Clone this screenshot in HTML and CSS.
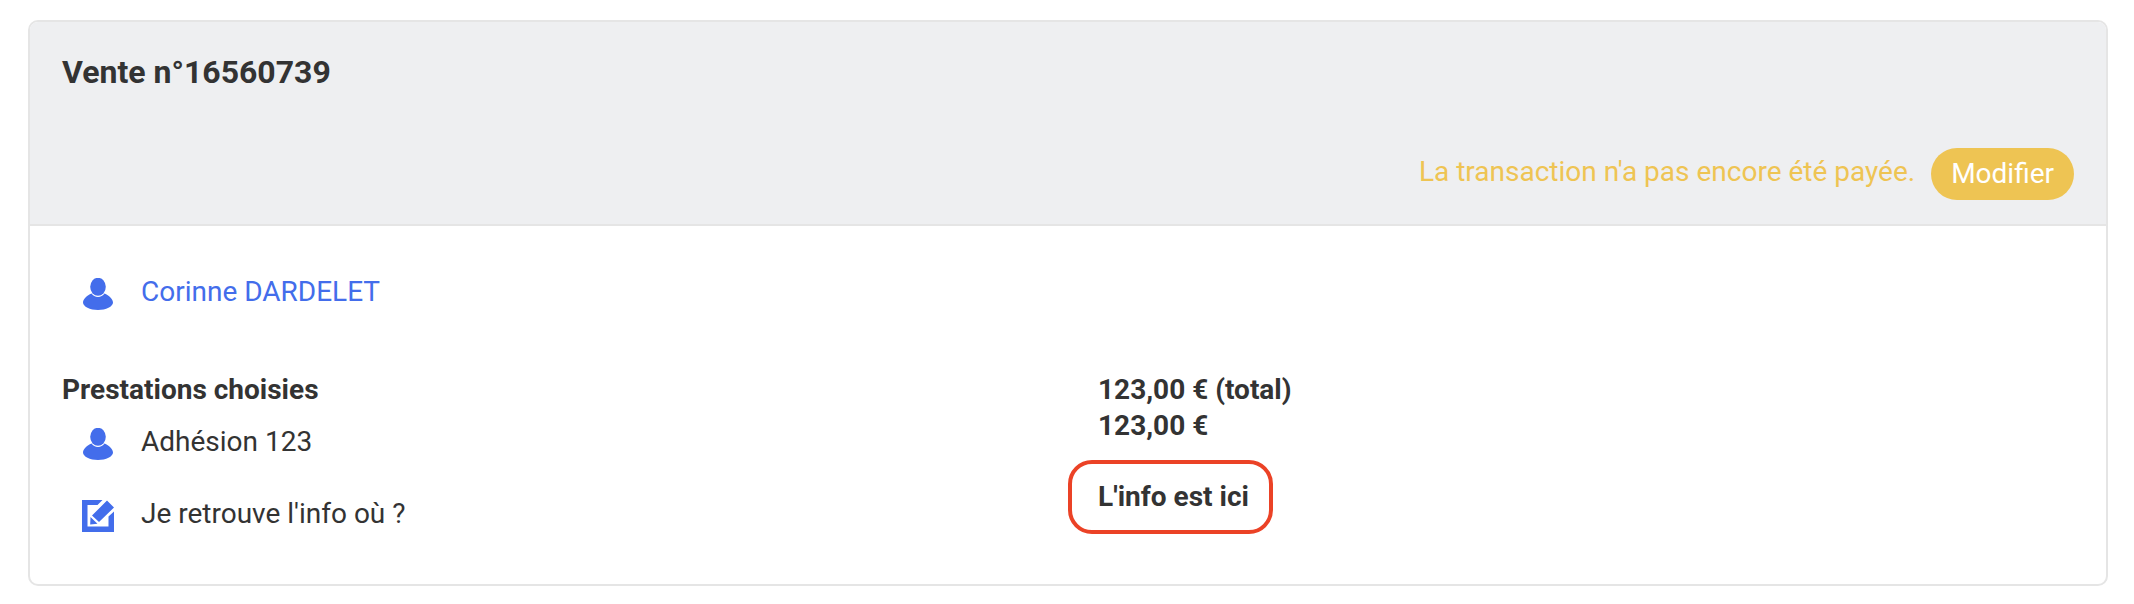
FILE: index.html
```html
<!DOCTYPE html>
<html lang="fr">
<head>
<meta charset="utf-8">
<title>Vente n°16560739</title>
<link rel="stylesheet" href="styles.css">
</head>
<body>
<svg class="sprite" aria-hidden="true">
  <symbol id="icon-user" viewBox="0 0 32 32">
    <path d="M9.5 15.5C5 17.500 1 21 1 24.500C1 28.500 8 32 16 32S31 28.500 31 24.500C31 21 27 17.500 22.500 15.500C21 17.700 18.700 19 16 19S11 17.700 9.500 15.500Z"/>
    <ellipse cx="16" cy="8.800" rx="7.800" ry="9"/>
  </symbol>
  <symbol id="icon-edit" viewBox="0 0 32 32">
    <path d="M0 0H20.500L15.500 5H5.500V26.500H26.500V16.500L32 11.500V32H0Z"/>
    <path d="M25 0.500L32 7.500L17 22L10 15.500ZM8.500 17L15.500 23.800L8.200 24.500Z"/>
  </symbol>
</svg>
<main class="card">
  <header class="card-header">
    <h1 class="card-title">Vente n°16560739</h1>
    <div class="status">
      <p class="status-text">La transaction n'a pas encore été payée.</p>
      <button class="status-button" type="button">Modifier</button>
    </div>
  </header>
  <div class="card-body">
    <div class="item">
      <svg class="icon" aria-hidden="true"><use href="#icon-user"/></svg>
      <a class="customer" href="#">Corinne DARDELET</a>
    </div>
    <div class="columns">
      <section>
        <h2 class="section-title">Prestations choisies</h2>
        <ul class="items">
          <li class="item">
            <svg class="icon" aria-hidden="true"><use href="#icon-user"/></svg>
            <span>Adhésion 123</span>
          </li>
          <li class="item">
            <svg class="icon" aria-hidden="true"><use href="#icon-edit"/></svg>
            <span>Je retrouve l'info où ?</span>
          </li>
        </ul>
      </section>
      <section class="amounts">
        <p class="amount">123,00 € (total)</p>
        <p class="amount">123,00 €</p>
        <p class="highlight">L'info est ici</p>
      </section>
    </div>
  </div>
</main>
</body>
</html>
```
FILE: styles.css
```css
* {
  box-sizing: border-box;
}

body {
  margin: 0;
  padding: 20px 26px 18px 28px;
  background: #fff;
  color: #333;
  font-family: Roboto, "Liberation Sans", sans-serif;
  font-size: 28px;
  line-height: 36px;
}

h1, h2, p, ul {
  margin: 0;
  padding: 0;
}

.sprite {
  display: none;
}

.card {
  border: 2px solid #e5e5e5;
  border-radius: 10px;
  overflow: hidden;
}

.card-header {
  padding: 30px 32px 24px;
  background: #eeeff1;
  border-bottom: 2px solid #e5e5e5;
}

.card-title {
  margin-bottom: 56px;
  font-size: 32px;
  line-height: 40px;
}

.status {
  display: flex;
  justify-content: flex-end;
  align-items: center;
  gap: 16px;
}

.status-text {
  padding-bottom: 4px;
  color: #eec453;
}

.status-button {
  height: 52px;
  padding: 0 20px;
  border: 0;
  border-radius: 26px;
  background: #eec453;
  color: #fff;
  font: inherit;
}

.card-body {
  padding: 48px 32px 50px;
}

.item {
  display: flex;
  align-items: flex-start;
  gap: 27px;
  padding-left: 20px;
}

.icon {
  width: 32px;
  height: 32px;
  margin-top: 4px;
  fill: #436deb;
}

.customer {
  color: #436deb;
  text-decoration: none;
}

.columns {
  display: grid;
  grid-template-columns: 1fr 1fr;
  margin-top: 62px;
}

.section-title {
  margin-bottom: 16px;
  font-size: 28px;
}

.items {
  display: grid;
  gap: 36px;
  list-style: none;
}

.amounts {
  font-weight: 700;
}

.amount {
  padding-left: 30px;
}

.highlight {
  width: fit-content;
  margin-top: 16px;
  padding: 15px 20px 15px 26px;
  border: 4px solid #eb4226;
  border-radius: 24px;
}
```
